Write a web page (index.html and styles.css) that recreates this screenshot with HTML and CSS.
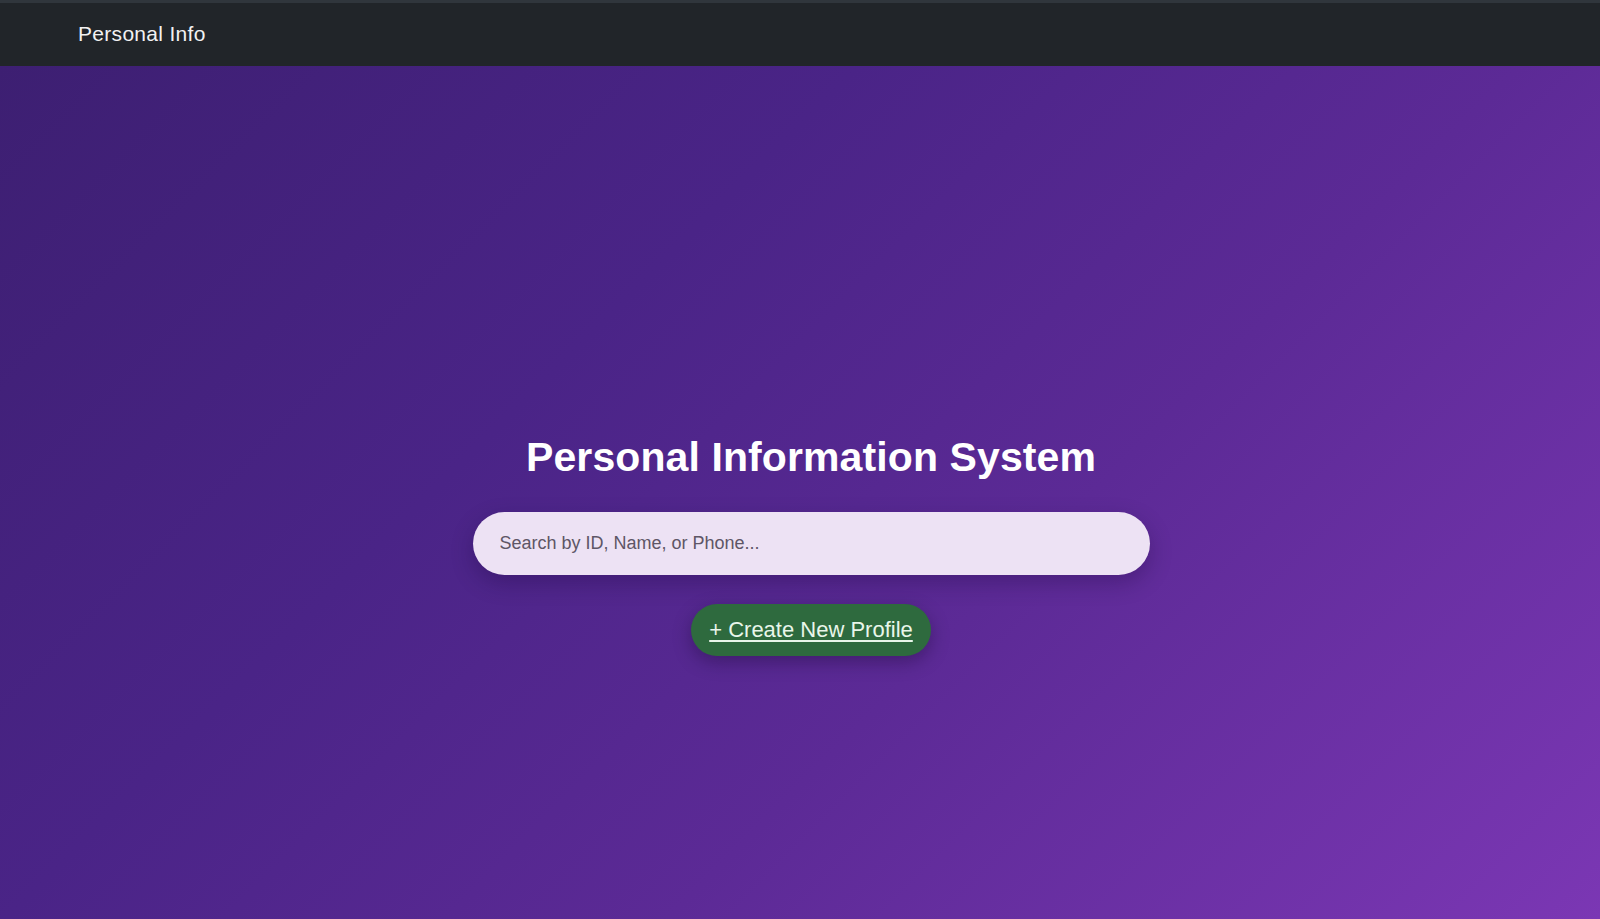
FILE: index.html
```html
<!DOCTYPE html>
<html lang="en">
<head>
<meta charset="utf-8">
<title>Personal Info</title>
<link rel="stylesheet" href="styles.css">
</head>
<body>
<nav class="navbar">
  <a class="brand" href="#">Personal Info</a>
</nav>
<main class="hero">
  <div class="content">
    <h1 class="title">Personal Information System</h1>
    <input class="search" type="text" placeholder="Search by ID, Name, or Phone...">
    <a class="create-btn" href="#">+ Create New Profile</a>
  </div>
</main>
</body>
</html>
```
FILE: styles.css
```css
* { box-sizing: border-box; }
html, body { margin: 0; padding: 0; height: 100%; }
body {
  font-family: "Liberation Sans", Arial, sans-serif;
  background: #4a2586;
  display: flex;
  flex-direction: column;
  min-height: 919px;
}
.navbar {
  height: 66px;
  background: #212529;
  border-top: 3px solid #30363c;
  display: flex;
  align-items: center;
  padding-left: 78px;
  flex: none;
}
.brand {
  color: #f2f2f2;
  text-decoration: none;
  font-size: 21px;
  letter-spacing: 0.3px;
  margin-top: -1px;
}
.hero {
  flex: 1;
  background: linear-gradient(135deg, #3d1f72 0%, #4a2487 35%, #5c2a96 62%, #7b37b4 100%);
  display: flex;
  justify-content: center;
  padding-left: 22px;
}
.content {
  display: flex;
  flex-direction: column;
  align-items: center;
  padding-top: 367px;
}
.title {
  margin: 0;
  color: #ffffff;
  font-size: 41px;
  font-weight: 700;
  letter-spacing: 0.1px;
  line-height: 48px;
}
.search {
  margin-top: 31px;
  width: 677px;
  height: 63px;
  border: none;
  border-radius: 32px;
  background: #ede2f4;
  padding: 0 27px;
  font-family: "Liberation Sans", Arial, sans-serif;
  font-size: 18px;
  color: #333;
  box-shadow: 0 8px 22px rgba(20, 5, 50, 0.28);
  outline: none;
}
.search::placeholder { color: #5e5666; }
.create-btn {
  margin-top: 29px;
  width: 240px;
  height: 52px;
  border-radius: 26px;
  background: #2e6a3e;
  color: #e9f6ea;
  font-size: 22px;
  display: flex;
  align-items: center;
  justify-content: center;
  text-decoration: underline;
  text-underline-offset: 3px;
  text-decoration-thickness: 1.5px;
  box-shadow: 0 6px 18px rgba(20, 5, 40, 0.35);
}
```
